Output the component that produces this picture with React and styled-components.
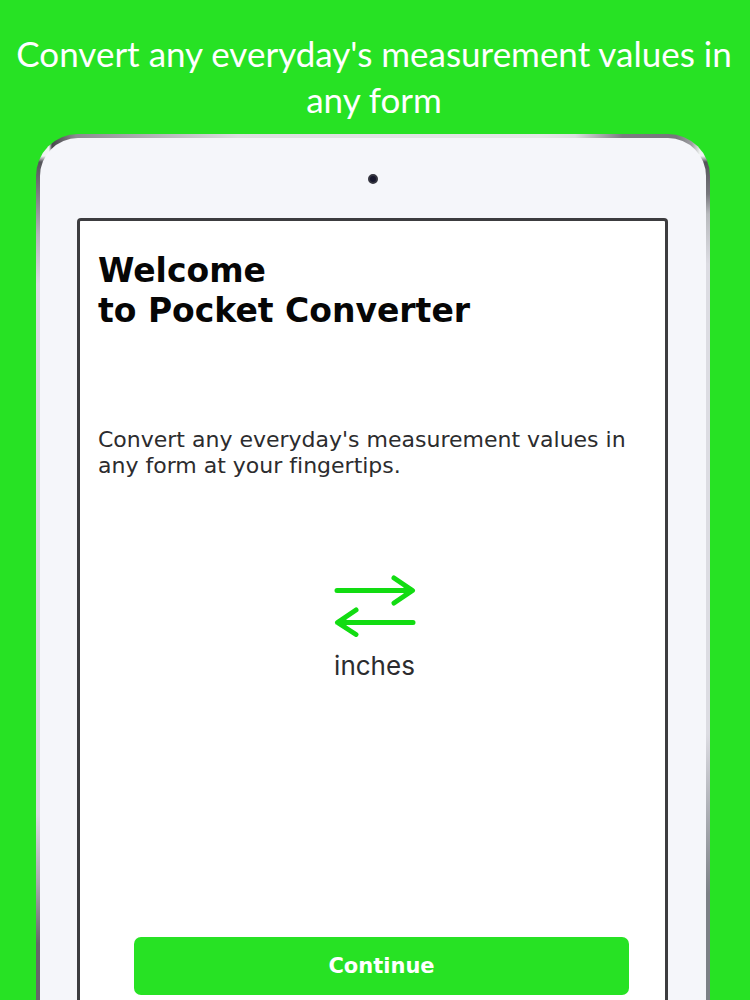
import React from 'react';
import styled, { createGlobalStyle } from 'styled-components';

const palette = {
  green: '#27e224',
  arrow: '#12dc12',
  shell: '#f5f6fa',
  frame: '#3c3c3f',
  white: '#ffffff',
  black: '#060606',
  text: '#2c2c2e',
};

const GlobalStyle = createGlobalStyle`
  * {
    box-sizing: border-box;
  }

  body {
    margin: 0;
    background: ${palette.green};
    font-variant-ligatures: none;
  }
`;

const Page = styled.main`
  display: flex;
  flex-direction: column;
  min-height: 100vh;
  padding: 30px 40px 0 36px;
  background: ${palette.green};
`;

const Headline = styled.h1`
  margin: 0 -34px 12px -32px;
  color: ${palette.white};
  font-family: Lato, sans-serif;
  font-size: 35px;
  font-weight: 400;
  line-height: 46px;
  text-align: center;
`;

// brushed metal edge: top strip, then the left and right sides
const Device = styled.section`
  display: flex;
  flex: 1;
  flex-direction: column;
  padding: 4px 4px 0;
  border-radius: 42px 42px 0 0;
  background:
    linear-gradient(
        to right,
        #f0f4f2 13px,
        #48484c 16px,
        #8c8c90 40px,
        #dcdfdf 30%,
        #e4e8e6 75%,
        #dcdfdf 80%,
        #7c7c80 87%,
        #77777b calc(100% - 34px),
        #a0a0a4 calc(100% - 18px),
        #f0f4f2 calc(100% - 10px)
      )
      top / 100% 20px no-repeat,
    linear-gradient(
        to bottom,
        #f0f4f2 22px,
        #55555a 28px,
        #77777c 55px,
        #b4b2ba 100px,
        #dcdae2 150px,
        #dcdae2 680px,
        #a9a7ae 750px,
        #66666a 810px
      )
      left / 50% 100% no-repeat,
    linear-gradient(
        to bottom,
        #f0f4f2 22px,
        #55555a 28px,
        #77777c 60px,
        #b8babd 80px,
        #dcdce2 130px,
        #dcdce2 600px,
        #7c8186 760px
      )
      right / 50% 100% no-repeat;
`;

const Shell = styled.div`
  display: flex;
  flex: 1;
  flex-direction: column;
  padding: 36px 38px 0 37px;
  border-radius: 38px 38px 0 0;
  background: ${palette.shell};
`;

const Camera = styled.div`
  align-self: center;
  width: 10px;
  height: 10px;
  margin-bottom: 34px;
  border: 2px solid #35353f;
  border-radius: 50%;
  background: #16162c;
`;

const Screen = styled.div`
  display: flex;
  flex: 1;
  flex-direction: column;
  padding: 30px 18px 5px;
  border: 3px solid ${palette.frame};
  border-bottom: 0;
  border-radius: 4px 4px 0 0;
  background: ${palette.white};
`;

const Title = styled.h2`
  margin: 0 0 96px;
  color: ${palette.black};
  font-family: 'DejaVu Sans', sans-serif;
  font-size: 33px;
  font-weight: 700;
  line-height: 40px;
`;

const Description = styled.p`
  margin: 0 0 96px;
  color: ${palette.text};
  font-family: 'DejaVu Sans', sans-serif;
  font-size: 22px;
  line-height: 26px;
`;

const Converter = styled.div`
  display: flex;
  flex-direction: column;
  align-items: center;
  gap: 14px;
  padding-left: 4px;
`;

const Arrows = styled.svg`
  width: 82px;
  height: 62px;
  fill: none;
  stroke: ${palette.arrow};
  stroke-width: 5;
  stroke-linecap: round;
  stroke-linejoin: round;
`;

const Unit = styled.span`
  color: ${palette.text};
  font-family: Inter, sans-serif;
  font-size: 26px;
  line-height: 30px;
`;

const ContinueButton = styled.button`
  height: 58px;
  margin: auto 18px 0 36px;
  border: 0;
  border-radius: 7px;
  color: ${palette.white};
  background: ${palette.green};
  font-family: 'DejaVu Sans', sans-serif;
  font-size: 21px;
  font-weight: 700;
  cursor: pointer;
`;

function App() {
  return (
    <>
      <GlobalStyle />
      <Page>
        <Headline>Convert any everyday's measurement values in any form</Headline>
        <Device>
          <Shell>
            <Camera />
            <Screen>
              <Title>
                Welcome
                <br />
                to Pocket Converter
              </Title>
              <Description>
                Convert any everyday's measurement values in any form at your fingertips.
              </Description>
              <Converter>
                <Arrows viewBox="0 0 82 62" aria-hidden="true">
                  <path d="M3 15.500H78M60 3L78.500 15.500L60 28M72 13V18" />
                  <path d="M79 47.500H4M22 35L3.500 47.500L22 59.500M10 45V50" />
                </Arrows>
                <Unit>inches</Unit>
              </Converter>
              <ContinueButton type="button">Continue</ContinueButton>
            </Screen>
          </Shell>
        </Device>
      </Page>
    </>
  );
}

export default App;
